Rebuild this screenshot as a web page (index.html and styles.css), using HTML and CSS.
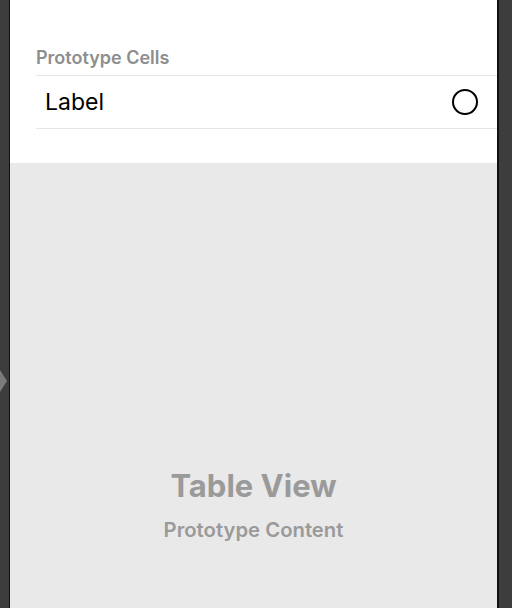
FILE: index.html
```html
<!DOCTYPE html>
<html>
<head>
<meta charset="utf-8">
<link rel="stylesheet" href="styles.css">
</head>
<body>
<div class="frame">
  <div class="gutter"><span class="arrow"></span></div>
  <div class="canvas">
    <div class="header-area">
      <div class="section-title">Prototype Cells</div>
      <div class="cell">
        <span class="label">Label</span>
        <svg class="radio" width="28" height="28" viewBox="0 0 28 28"><circle cx="14" cy="14" r="12" fill="none" stroke="#000" stroke-width="2"/></svg>
      </div>
    </div>
    <div class="table-body">
      <div class="tv-title">Table View</div>
      <div class="tv-sub">Prototype Content</div>
    </div>
  </div>
  <div class="right-gutter"></div>
</div>
</body>
</html>
```
FILE: styles.css
```css
html, body {
  margin: 0;
  padding: 0;
  background: #3d3d3d;
}
.frame {
  display: flex;
  width: 512px;
  height: 608px;
  overflow: hidden;
  font-family: Inter, "Liberation Sans", sans-serif;
}
.gutter {
  width: 9px;
  flex: none;
  background: #3d3d3d;
  border-right: 1px solid #111;
  padding-top: 370px;
  box-sizing: content-box;
}
.arrow {
  display: block;
  width: 0;
  height: 0;
  border-top: 11px solid transparent;
  border-bottom: 11px solid transparent;
  border-left: 7px solid #7b7b7b;
}
.canvas {
  width: 487px;
  flex: none;
  display: flex;
  flex-direction: column;
  background: #e9e9e9;
}
.header-area {
  height: 163px;
  flex: none;
  box-sizing: border-box;
  background: #fff;
  padding-top: 48px;
  padding-left: 26px;
}
.section-title {
  font-size: 18px;
  line-height: 20px;
  font-weight: 600;
  color: #8e8e8e;
  margin-bottom: 7px;
}
.cell {
  display: flex;
  align-items: center;
  justify-content: space-between;
  height: 52px;
  border-top: 1px solid #e6e6e6;
  border-bottom: 1px solid #e6e6e6;
  padding-left: 9px;
  padding-right: 18px;
}
.label {
  font-size: 23px;
  line-height: 52px;
  color: #000;
}
.radio {
  display: block;
}
.table-body {
  flex: 1;
  display: flex;
  flex-direction: column;
  justify-content: flex-end;
  align-items: center;
  padding-bottom: 65px;
}
.tv-title {
  font-size: 31px;
  line-height: 36px;
  font-weight: 700;
  color: #9a9a9a;
}
.tv-sub {
  margin-top: 13px;
  font-size: 20.3px;
  line-height: 26px;
  font-weight: 600;
  color: #9a9a9a;
}
.right-gutter {
  flex: 1;
  background: #3d3d3d;
  border-left: 2px solid #111;
}
```
